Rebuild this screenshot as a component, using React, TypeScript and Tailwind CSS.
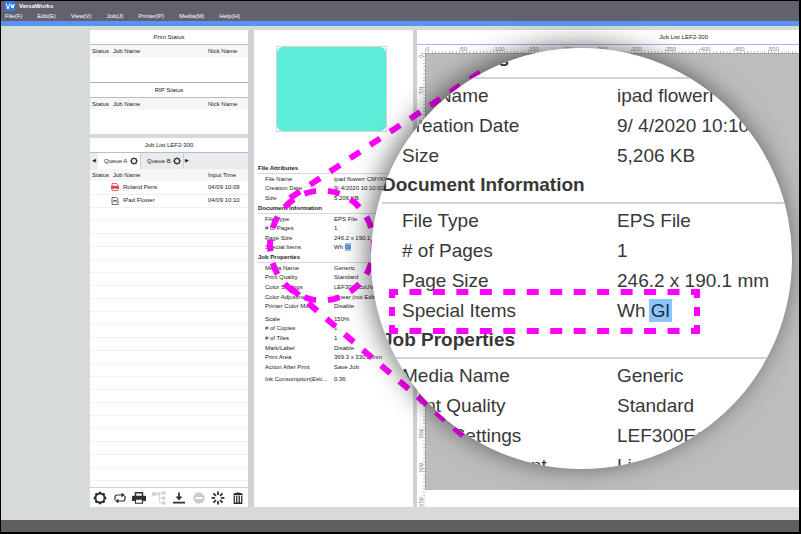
import type { ReactNode } from "react";

type Field = { label: string; value: ReactNode };

const MENU = ["File(F)", "Edit(E)", "View(V)", "Job(J)", "Printer(P)", "Media(M)", "Help(H)"];

const FILE_ATTRIBUTES: Field[] = [
  { label: "File Name", value: "ipad flowerr CMYKW" },
  { label: "Creation Date", value: "9/ 4/2020 10:10:02" },
  { label: "Size", value: "5,206 KB" },
];

const DOCUMENT_INFO: Field[] = [
  { label: "File Type", value: "EPS File" },
  { label: "# of Pages", value: "1" },
  { label: "Page Size", value: "246.2 x 190.1 mm" },
  { label: "Special Items", value: <SpecialItems /> },
];

const JOB_PROPERTIES: Field[] = [
  { label: "Media Name", value: "Generic" },
  { label: "Print Quality", value: "Standard" },
  { label: "Color Settings", value: "LEF300EcoUV" },
  { label: "Color Adjustment", value: "Linear (not Edited)" },
  { label: "Printer Color Mode", value: "Disable" },
];

const OUTPUT_PROPERTIES: Field[] = [
  { label: "Scale", value: "150%" },
  { label: "# of Copies", value: "1" },
  { label: "# of Tiles", value: "1" },
  { label: "Mark/Label", value: "Disable" },
  { label: "Print Area", value: "369.3 x 330.2 mm" },
  { label: "Action After Print", value: "Save Job" },
];

const JOBS = [
  { name: "Roland Pens", time: "04/09 10:09", kind: "pdf" },
  { name: "iPad Flower", time: "04/09 10:10", kind: "eps" },
];

function SpecialItems() {
  return (
    <>
      Wh <mark className="bg-[#8cc4fc] py-px text-[#1c2c44]">Gl</mark>
    </>
  );
}

/* ── Icons ─────────────────────────────────────────────── */

const SPOKES = [0, 45, 90, 135, 180, 225, 270, 315];

function Logo() {
  return (
    <svg viewBox="0 0 10 10" className="size-2.5" aria-hidden="true">
      <rect width="10" height="10" rx="1" fill="#2f7df0" />
      <path d="M1 2.5 3 8 5 2.5M6 3l.8 4 .8-3 .7 3L9.2 3" fill="none" stroke="#fff" />
    </svg>
  );
}

function Gear({ className }: { className: string }) {
  return (
    <svg viewBox="0 0 24 24" className={className} aria-hidden="true">
      <circle cx="12" cy="12" r="7.5" fill="none" stroke="currentColor" strokeWidth="2.8" />
      {SPOKES.map((a) => (
        <path key={a} d="M10 1.200h4l1 3.500H9z" fill="currentColor" transform={`rotate(${a} 12 12)`} />
      ))}
    </svg>
  );
}

function ToolIcon({ children, className }: { children: ReactNode; className: string }) {
  return (
    <svg viewBox="0 0 24 24" fill="none" stroke="currentColor" className={className} aria-hidden="true">
      {children}
    </svg>
  );
}

const TOOLS: { label: string; icon: ReactNode }[] = [
  { label: "Settings", icon: <Gear className="size-3.5 text-[#2e2e2e]" /> },
  {
    label: "Repeat",
    icon: (
      <ToolIcon className="size-3 text-[#2e2e2e]">
        <path d="M2 16v-5q0-5 4-5h11M22 8v5q0 5-4 5H7" strokeWidth="2.4" />
        <path d="m15 1.500 7 4.500-7 4.500zM9 13.500 2 18l7 4.500z" fill="currentColor" stroke="none" />
      </ToolIcon>
    ),
  },
  {
    label: "Print",
    icon: (
      <ToolIcon className="size-3.5 text-[#2e2e2e]">
        <path d="M6 9V3h12v6" strokeWidth="2.400" />
        <path d="M2 8h20q2 0 2 2v7h-5v-3H5v3H0v-7q0-2 2-2z" fill="currentColor" stroke="none" />
        <path d="M6 14h12v7H6z" fill="#fff" strokeWidth="2" />
      </ToolIcon>
    ),
  },
  {
    label: "Nest",
    icon: (
      <ToolIcon className="size-3.5 text-[#cfcfcf]">
        <path d="M0 2h8v6H0zM10 2h3v5h-3zM17 1h6v5h-6zM17 10h6v5h-6zM17 18h6v5h-6z" fill="currentColor" stroke="none" />
        <path d="M8 4h9M13 4v16h4M13 12h4" strokeWidth="1.500" />
      </ToolIcon>
    ),
  },
  {
    label: "Import",
    icon: (
      <ToolIcon className="size-3 text-[#2e2e2e]">
        <path d="M12 1v12M0 21h24" strokeWidth="3.500" />
        <path d="M5 9h14l-7 8z" fill="currentColor" stroke="none" />
      </ToolIcon>
    ),
  },
  {
    label: "Cancel",
    icon: (
      <ToolIcon className="size-3 text-[#cbcbcb]">
        <circle cx="12" cy="12" r="11.500" fill="currentColor" stroke="none" />
        <path d="M5 12h14" stroke="#fff" strokeWidth="4" />
      </ToolIcon>
    ),
  },
  {
    label: "Process",
    icon: (
      <ToolIcon className="size-3.5 text-[#2e2e2e]">
        {SPOKES.map((a) => (
          <path key={a} d="M12 1v6" strokeWidth="3" transform={`rotate(${a} 12 12)`} />
        ))}
      </ToolIcon>
    ),
  },
  {
    label: "Delete",
    icon: (
      <ToolIcon className="size-3 text-[#2e2e2e]">
        <path d="M2 6q1-5 10-5t10 5z" fill="currentColor" stroke="none" />
        <path d="M4.500 7v15.500h15V7M9.500 7v15M14.500 7v15" strokeWidth="2.600" />
      </ToolIcon>
    ),
  },
];

function FileIcon({ kind }: { kind: string }) {
  const color = kind === "pdf" ? "#e0474c" : "#4a4a5c";
  return (
    <svg viewBox="0 0 16 16" className="size-2 shrink-0" fill="none" stroke={color} aria-hidden="true">
      <path d="M2 1h9l3 3v11H2z" fill="#fff" strokeWidth="1.600" />
      {kind === "pdf" ? (
        <path d="M0 6h16v5H0z" fill={color} />
      ) : (
        <path d="M5 11q0-4 3-4t3 4M5 7h6" strokeWidth="1.600" />
      )}
    </svg>
  );
}

/* ── Left column ───────────────────────────────────────── */

function PanelTitle({ children }: { children: ReactNode }) {
  return (
    <h2 className="h-[15px] border-b border-[#b4bed2] text-center leading-[14px]">{children}</h2>
  );
}

function JobTable({ lastColumn, children }: { lastColumn: string; children?: ReactNode }) {
  return (
    <table className="w-full table-fixed border-collapse text-left">
      <thead className="bg-[#f6f6f6]">
        <tr className="h-3">
          <th className="w-[23px] pl-0.5 font-normal">Status</th>
          <th className="font-normal">Job Name</th>
          <th className="w-10 font-normal">{lastColumn}</th>
        </tr>
      </thead>
      <tbody>{children}</tbody>
    </table>
  );
}

function QueueTab({ name, active }: { name: string; active?: boolean }) {
  return (
    <button
      type="button"
      role="tab"
      aria-selected={!!active}
      className={`flex w-[43px] items-center justify-between border-r border-[#cdd0d8] pr-0.5 pl-1.5 ${active ? "bg-white" : "bg-[#eaebef]"}`}
    >
      {name}
      <Gear className="size-2" />
    </button>
  );
}

function QueueColumn() {
  return (
    <div className="flex w-[158px] shrink-0 flex-col gap-1">
      <div className="bg-white">
        <section className="h-[52px]">
          <PanelTitle>Print Status</PanelTitle>
          <JobTable lastColumn="Nick Name" />
        </section>
        <section className="h-[52px] border-t border-[#aab4bc]">
          <PanelTitle>RIP Status</PanelTitle>
          <JobTable lastColumn="Nick Name" />
        </section>
      </div>

      <section className="flex flex-1 flex-col bg-white">
        <PanelTitle>Job List LEF2-300</PanelTitle>
        <div role="tablist" className="flex h-4 bg-[#eaebef]">
          <button type="button" aria-label="Previous queue" className="w-2 text-[5px]">◀</button>
          <QueueTab name="Queue A" active />
          <QueueTab name="Queue B" />
          <button type="button" aria-label="Next queue" className="w-1.5 text-[5px]">▶</button>
        </div>
        <JobTable lastColumn="Input Time">
          {JOBS.map((job) => (
            <tr key={job.name} className="h-[13px] border-b border-[#f0f0f0]">
              <td />
              <td>
                <span className="-ml-0.5 flex items-center gap-1">
                  <FileIcon kind={job.kind} />
                  {job.name}
                </span>
              </td>
              <td className="whitespace-nowrap">{job.time}</td>
            </tr>
          ))}
        </JobTable>
        {/* Empty rows of the queue */}
        <div className="flex-1 bg-[repeating-linear-gradient(to_bottom,transparent_0_12px,#f2f2f2_12px_13px)]" />
        <div className="grid h-5 grid-cols-8 border-t border-[#d2d2d2]">
          {TOOLS.map((tool) => (
            <button key={tool.label} type="button" aria-label={tool.label} className="grid place-items-center">
              {tool.icon}
            </button>
          ))}
        </div>
      </section>
    </div>
  );
}

/* ── Middle column ─────────────────────────────────────── */

function FieldHeading({ children }: { children: ReactNode }) {
  return (
    <h3 className="mr-1 ml-1 h-[11px] border-b border-[#d8d8d8] leading-[10px] font-bold">{children}</h3>
  );
}

function FieldList({ fields, className }: { fields: Field[]; className: string }) {
  return (
    <dl className={`grid auto-rows-fr pl-[11px] ${className}`}>
      {fields.map((f) => (
        <div key={f.label} className="flex min-h-0 items-center whitespace-nowrap">
          <dt className="w-[69px] shrink-0">{f.label}</dt>
          <dd>{f.value}</dd>
        </div>
      ))}
    </dl>
  );
}

function DetailsColumn() {
  return (
    <section className="w-[159px] shrink-0 overflow-hidden bg-white pt-4 leading-[8px]">
      <div className="mb-[31px] ml-[22px] h-[86px] w-[111px] border border-[#d4d4d4]">
        <div className="h-full rounded-md bg-[#5ceed6]" />
      </div>
      <FieldHeading>File Attributes</FieldHeading>
      <FieldList fields={FILE_ATTRIBUTES} className="h-[29px]" />
      <FieldHeading>Document Information</FieldHeading>
      <FieldList fields={DOCUMENT_INFO} className="h-[38px]" />
      <FieldHeading>Job Properties</FieldHeading>
      <FieldList fields={JOB_PROPERTIES} className="h-12" />
      <FieldList fields={OUTPUT_PROPERTIES} className="mt-[3px] h-[58px]" />
      <FieldList fields={[{ label: "Ink Consumption(Esti...", value: "0.36" }]} className="mt-0.5 h-2.5" />
    </section>
  );
}

/* ── Right column ──────────────────────────────────────── */

const X_MARKS = Array.from({ length: 11 }, (_, i) => i * 50);
const Y_MARKS = Array.from({ length: 14 }, (_, i) => i * 50);
const TICKS = Array.from({ length: 140 }, (_, i) => i);
const PX_PER_MARK = 34.3;

function Ruler({ vertical }: { vertical?: boolean }) {
  return (
    <svg
      className={vertical ? "h-full w-2" : "h-2 w-full"}
      fill="#8a8a8a"
      stroke="none"
      fontSize="6"
      aria-hidden="true"
    >
      <g transform={vertical ? "matrix(0 1 1 0 0 0)" : undefined}>
        {TICKS.map((n) => (
          <rect key={n} x={(n * PX_PER_MARK) / 10} y={n % 10 ? 6 : 4} width="0.5" height={n % 10 ? 2 : 4} />
        ))}
      </g>
      {vertical
        ? Y_MARKS.map((mark, i) => (
            <text key={mark} textAnchor="middle" transform={`translate(6 ${i * PX_PER_MARK + 3}) rotate(-90)`}>
              {mark}
            </text>
          ))
        : X_MARKS.map((mark, i) => (
            <text key={mark} x={i * PX_PER_MARK + 1} y="6">{mark}</text>
          ))}
    </svg>
  );
}

function LayoutColumn() {
  return (
    <section className="flex min-w-0 flex-1 flex-col bg-white">
      <h2 className="h-[15px] border-b border-[#a9b4e4] pr-[91px] text-right leading-[15px]">
        Job List LEF2-300
      </h2>
      <div className="grid flex-1 grid-cols-[8px_1fr] grid-rows-[8px_1fr]">
        <div />
        <Ruler />
        <div className="relative">
          <div className="absolute inset-0 overflow-hidden">
            <Ruler vertical />
          </div>
        </div>
        <div className="mb-[17px] border-t border-l border-dotted border-[#8c8c8c] bg-[#bdbdbd]" />
      </div>
    </section>
  );
}

/* ── Magnifier callout ─────────────────────────────────── */

function ZoomSection({ title, fields }: { title: string; fields: Field[] }) {
  return (
    <section>
      <h3 className="mb-0.5 h-[33px] border-b-2 border-[#d2d2d2] leading-[28px] font-bold">{title}</h3>
      <dl className="pl-5">
        {fields.map((f) => (
          <div key={f.label} className="flex leading-[30px] whitespace-nowrap">
            <dt className="w-[215px] shrink-0">{f.label}</dt>
            <dd className="[&_mark]:-mx-0.5 [&_mark]:px-0.5">{f.value}</dd>
          </div>
        ))}
      </dl>
    </section>
  );
}

function Callout() {
  return (
    <>
      <svg
        className="pointer-events-none absolute top-0 left-0 h-full w-full"
        fill="none"
        stroke="#ff00ff"
        strokeWidth="6"
        aria-hidden="true"
      >
        <ellipse cx="321" cy="244.500" rx="52" ry="55" pathLength="280" strokeDasharray="10 10" strokeDashoffset="5" />
        <path d="M289 197 479 71.500M289 286.500 462 434.500" strokeDasharray="12 12" />
      </svg>

      <div className="absolute top-[47px] left-[370px] size-[421px] overflow-hidden rounded-full bg-white pl-[11px] text-[19px] text-[#383838] shadow-[-4px_-3px_26px_0px_rgba(0,0,0,0.55)]">
        <div className="-mt-0.5">
          <ZoomSection title="File Attributes" fields={FILE_ATTRIBUTES} />
          <ZoomSection title="Document Information" fields={DOCUMENT_INFO} />
          <ZoomSection title="Job Properties" fields={JOB_PROPERTIES} />
        </div>
      </div>

      <svg
        className="pointer-events-none absolute top-0 left-0 h-full w-full"
        fill="none"
        stroke="#ff00ff"
        strokeWidth="6"
        aria-hidden="true"
      >
        <path d="M391 291H696M391 330H696" strokeDasharray="12 11.460" strokeDashoffset="6" />
        <path d="M391 288V333M696 288V333" strokeDasharray="9 9" />
      </svg>
    </>
  );
}

export default function App() {
  return (
    <div className="relative flex min-h-screen flex-col overflow-hidden border-t border-r-2 border-b-2 border-l border-black bg-[#d6dadb] font-['Liberation_Sans',Arial,sans-serif] text-[6px] text-[#222]">
      <header className="border-b-[5px] border-[#5b94f0] bg-[#62626e] pl-1 text-white">
        <div className="flex h-2.5 items-center gap-1 overflow-hidden">
          <Logo />
          <h1 className="leading-[8px] font-bold">VersaWorks</h1>
        </div>
        <nav className="flex h-2.5 items-center gap-[15px] leading-[8px]">
          {MENU.map((item) => (
            <button key={item} type="button">{item}</button>
          ))}
        </nav>
      </header>

      <main className="flex flex-1 pt-1 pb-[13px] pl-[89px]">
        <QueueColumn />
        <div className="w-1.5 shrink-0 bg-[#cfd2d4]" />
        <DetailsColumn />
        <div className="w-1 shrink-0 bg-[#cfd2d4]" />
        <LayoutColumn />
      </main>
      <footer className="h-3 bg-[#606060]" />

      <Callout />
    </div>
  );
}
